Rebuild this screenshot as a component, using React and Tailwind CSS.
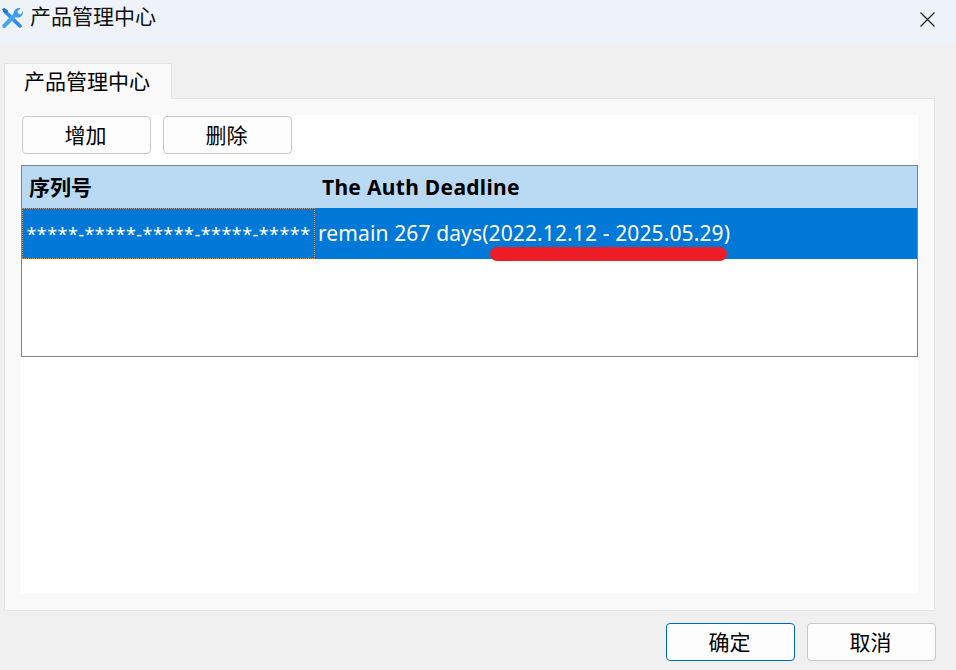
const font = { fontFamily: '"Noto Sans", "Noto Sans CJK SC", sans-serif' };

const WrenchIcon = () => (
  <svg width="22" height="22" viewBox="0 0 22 22" fill="none" className="shrink-0 -translate-y-[4px]">
    <path d="M4 4.5 L19 19" stroke="#2f8fe8" strokeWidth="3.8" strokeLinecap="round" />
    <path d="M1 2.5 L3 0.8 L7 3.5 L6.5 6 L4 6.5 Z" fill="#1f78d1" />
    <path d="M3.2 19 L14 8" stroke="#4aa3f0" strokeWidth="4" strokeLinecap="round" />
    <path d="M12.5 7 C12.5 3 16 0.3 19.5 1.2 L16.3 4.4 L17.4 6.8 L19.8 7.6 L21.8 4 C22.6 8.4 18.8 11.4 15 10.2 Z" fill="#3d9bee" />
  </svg>
);

const Btn = ({ children, primary }) => (
  <button
    className={
      "w-[129px] h-[38px] pr-[2px] rounded-[4px] bg-[#fdfdfd] text-[21px] leading-none text-black border " +
      (primary ? "border-[#0067c0]" : "border-[#c8c8c8]")
    }
  >
    {children}
  </button>
);

export default function App() {
  return (
    <div className="w-[956px] h-[670px] overflow-hidden bg-[#f0f0f0] flex flex-col" style={font}>
      <div className="h-[44px] shrink-0 bg-[#eef3f9] flex items-center pl-[1px] pr-[21px]">
        <WrenchIcon />
        <span className="ml-[7px] text-[21px] leading-none text-[#111] -translate-y-[6px]">产品管理中心</span>
        <svg width="15" height="15" viewBox="0 0 15 15" className="ml-auto -translate-y-[3px]">
          <path d="M0.5 0.5 L14.5 14.5 M14.5 0.5 L0.5 14.5" stroke="#1a1a1a" strokeWidth="1.2" />
        </svg>
      </div>

      <div className="flex-1 flex flex-col pl-[4px] pr-[21px] pt-[19px]">
        <div className="w-[168px] h-[36px] -mb-px pr-[2px] relative z-10 bg-[#f9f9f9] border border-b-0 border-[#e5e5e5] flex items-center justify-center text-[21px] leading-none text-black">
          产品管理中心
        </div>
        <div className="h-[513px] bg-[#f9f9f9] border border-[#e5e5e5] px-[16px] pt-[16px] pb-[17px]">
          <div className="h-full bg-white flex flex-col">
            <div className="flex gap-[12px] pl-[1px] pt-[1px]">
              <Btn>增加</Btn>
              <Btn>删除</Btn>
            </div>

            <div className="mt-[11px] h-[192px] border border-[#7f8390]">
              <div className="h-[42px] bg-[#badaf3] flex items-center text-[21px] font-bold text-black leading-none">
                <div className="w-[300px] pl-[7px]">序列号</div>
                <div className="tracking-[0.3px]">The Auth Deadline</div>
              </div>
              <div className="relative h-[51px] bg-[#0078d7] flex items-center text-white">
                <div className="w-[293px] h-full border border-dotted border-[#e8862a] flex items-center justify-center text-[18px] leading-none whitespace-nowrap tracking-[0.45px]">
                  *****-*****-*****-*****-*****
                </div>
                <div className="ml-[3px] text-[21px] tracking-[0.12px] leading-none whitespace-nowrap">
                  remain 267 days(2022.12.12 - 2025.05.29)
                </div>
                <div className="absolute left-[468px] top-[39px] w-[237px] h-[14px] rounded-[7px] bg-[#ee1c25]" />
              </div>
            </div>
          </div>
        </div>
        <div className="flex justify-end gap-[12px] -mr-px mt-[12px]">
          <Btn primary>确定</Btn>
          <Btn>取消</Btn>
        </div>
      </div>
    </div>
  );
}
